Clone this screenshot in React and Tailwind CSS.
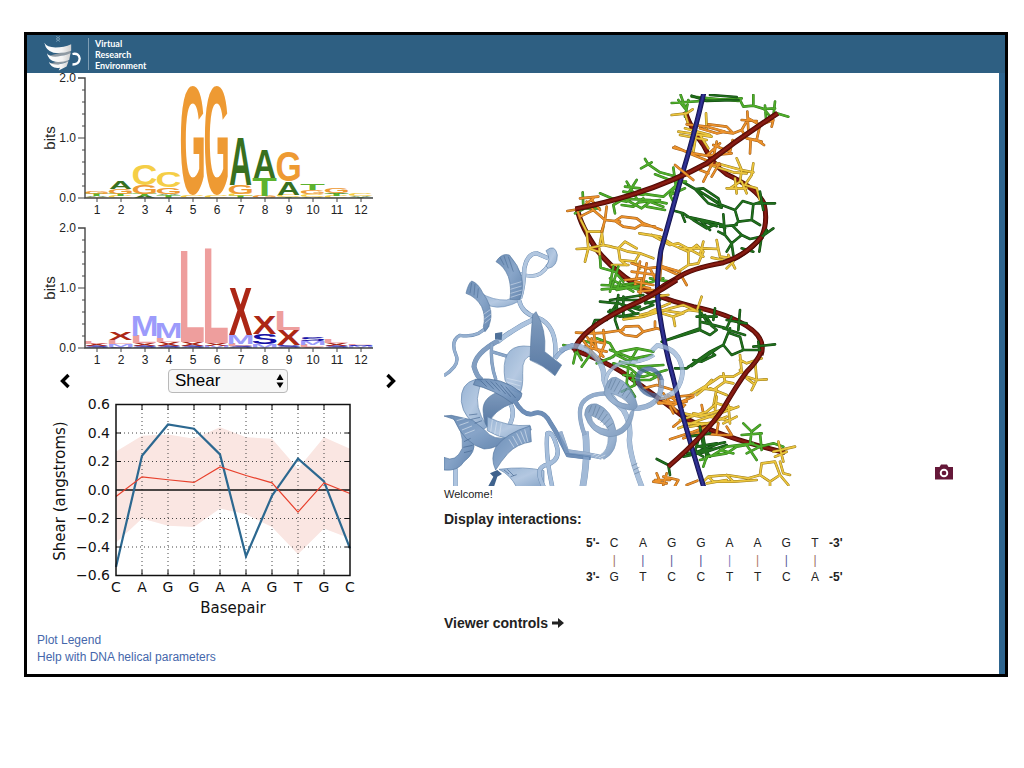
import React from "react";

const GLYPHS = {
  A: [0.0, 0.72, 0],
  C: [0.045, 0.64, 1],
  G: [0.045, 0.68, 1],
  T: [0.02, 0.57, 0],
  L: [0.07, 0.52, 0],
  X: [0.01, 0.65, 0],
  M: [0.07, 0.69, 0],
  S: [0.04, 0.58, 1],
};

const BASE_COLORS = { A: "#38701f", C: "#f5ce46", G: "#ee9a33", T: "#5db22f" };
const SHAPE_COLORS = { L: "#ee9e9d", X: "#ac2716", M: "#9c9bfb", S: "#1510a5" };

const BASE_STACKS = [
  [["C", 1], ["A", 1], ["T", 2], ["G", 3]],
  [["C", 2], ["T", 2], ["G", 5], ["A", 7]],
  [["A", 2], ["T", 2], ["G", 9], ["C", 21]],
  [["T", 3], ["A", 1], ["G", 7], ["C", 16]],
  [["C", 2], ["G", 111]],
  [["C", 2], ["G", 111]],
  [["T", 2], ["C", 2], ["G", 9], ["A", 47]],
  [["G", 2], ["T", 18], ["A", 28]],
  [["T", 1], ["C", 2], ["A", 13], ["G", 30]],
  [["A", 1], ["C", 3], ["G", 4], ["T", 6]],
  [["C", 2], ["T", 2], ["A", 1], ["G", 5]],
  [["T", 1], ["A", 1], ["C", 2]],
];

const SHAPE_STACKS = [
  [["S", 2], ["X", 2], ["L", 3]],
  [["S", 1], ["M", 3], ["L", 4], ["X", 8]],
  [["S", 2], ["X", 3], ["L", 7], ["M", 20]],
  [["S", 2], ["X", 4], ["L", 4], ["M", 15]],
  [["S", 2], ["X", 4], ["L", 90]],
  [["M", 2], ["X", 3], ["L", 95]],
  [["S", 2], ["L", 2], ["M", 9], ["X", 47]],
  [["M", 4], ["S", 10], ["X", 18]],
  [["S", 3], ["X", 15], ["L", 19]],
  [["X", 1], ["L", 2], ["M", 4], ["S", 4]],
  [["S", 2], ["X", 3], ["L", 4]],
  [["M", 2], ["S", 1], ["L", 1]],
];

function SequenceLogo({ label, stacks, colors }) {
  const base = 125;
  return (
    <svg role="img" aria-label={label} viewBox="0 0 350 142" className="h-[142px] w-[350px] overflow-visible font-['Liberation_Sans',Arial,sans-serif]">
      {stacks.map((stack, i) => {
        let y = base;
        return stack.map(([letter, h], j) => {
          const [left, width, round] = GLYPHS[letter];
          const sx = 23 / (width * 20);
          const cap = round ? 0.72 : 0.688;
          const sy = h / (cap * 20);
          const baseline = y - (round ? 0.016 * 20 * sy : 0);
          y -= h;
          return (
            <text key={i + "-" + j} fontSize="20" fontWeight="700" fill={colors[letter]}
              transform={`translate(${48 + 24 * i - left * 20 * sx} ${baseline}) scale(${sx} ${sy})`}>
              {letter}
            </text>
          );
        });
      })}
      <g stroke="#444" strokeWidth="1" fill="none">
        <path strokeWidth="1.4" d="M41 5H48V125H336" />
        <path d="M41 65H48M41 125H48M45 17H48M45 29H48M45 41H48M45 53H48M45 77H48M45 89H48M45 101H48M45 113H48" />
        {stacks.map((_, i) => <path key={i} d={`M${60 + 24 * i} 125v4`} />)}
      </g>
      <g fill="#222" fontSize="12">
        <text x="39" y="9" textAnchor="end">2.0</text>
        <text x="39" y="69" textAnchor="end">1.0</text>
        <text x="39" y="129" textAnchor="end">0.0</text>
        {stacks.map((_, i) => (
          <text key={i} x={60 + 24 * i} y="141" textAnchor="middle">{i + 1}</text>
        ))}
        <text fontSize="15" textAnchor="middle" transform="translate(18 65) rotate(-90)">bits</text>
      </g>
    </svg>
  );
}

const SHEAR = [-0.54, 0.24, 0.46, 0.43, 0.25, -0.465, -0.04, 0.22, 0.06, -0.41];
const MEAN = [-0.045, 0.092, 0.072, 0.053, 0.162, 0.102, 0.05, -0.155, 0.05, -0.025];
const UPPER = [0.27, 0.38, 0.39, 0.36, 0.44, 0.37, 0.36, 0.15, 0.37, 0.29];
const LOWER = [-0.37, -0.2, -0.25, -0.26, -0.13, -0.17, -0.26, -0.45, -0.27, -0.34];
const px = (i) => 76 + i * 26;
const py = (v) => 93 - v * 142.5;
const points = (values) => values.map((v, i) => `${px(i)},${py(v)}`).join(" ");

function ShearPlot() {
  const band = UPPER.map((v, i) => `${px(i)},${py(v)}`)
    .concat(LOWER.map((v, i) => `${px(i)},${py(v)}`).reverse())
    .join(" ");
  return (
    <svg role="img" aria-label="Shear by base pair" viewBox="0 0 320 222" className="h-[222px] w-[320px] font-['DejaVu_Sans',sans-serif]">
      <polygon points={band} fill="#fae6e2" />
      <g stroke="#444" strokeWidth="1" strokeDasharray="1 3">
        {[1, 2, 3, 4, 5, 6, 7, 8].map((i) => <path key={i} d={`M${px(i)} 8V178`} />)}
        {[0.4, 0.2, -0.2, -0.4].map((v) => <path key={v} d={`M76 ${py(v)}H310`} />)}
      </g>
      <path d="M76 93H310" stroke="#111" strokeWidth="1.3" />
      <polyline points={points(SHEAR)} fill="none" stroke="#2c6890" strokeWidth="2.2" />
      <polyline points={points(MEAN)} fill="none" stroke="#e8402c" strokeWidth="1.2" />
      <g stroke="#111" fill="none">
        {[1, 2, 3, 4, 5, 6, 7, 8].map((i) => <path key={i} d={`M${px(i)} 8v5M${px(i)} 178v-5`} />)}
        {[0.4, 0.2, -0.2, -0.4].map((v) => <path key={v} d={`M76 ${py(v)}h5M310 ${py(v)}h-5`} />)}
        <rect x="76" y="7.5" width="234" height="171" strokeWidth="1.5" />
      </g>
      <g fill="#111" fontSize="14">
        {["0.6", "0.4", "0.2", "0.0", "−0.2", "−0.4", "−0.6"].map((t, i) => (
          <text key={t} x="70" y={12 + i * 28.5} textAnchor="end">{t}</text>
        ))}
        {"CAGGAAGTGC".split("").map((c, i) => (
          <text key={i} x={px(i)} y="195" textAnchor="middle">{c}</text>
        ))}
        <text x="193" y="216" fontSize="15" textAnchor="middle">Basepair</text>
        <text fontSize="15" textAnchor="middle" transform="translate(25 94) rotate(-90)">Shear (angstroms)</text>
      </g>
    </svg>
  );
}

const TONES = {
  green: ["#2f7a18", "#50ad2b"],
  dark: ["#0f4410", "#22701d"],
  yellow: ["#987818", "#ecc63e"],
  orange: ["#9c5a16", "#ec922c"],
};

function Sticks({ tone, d }) {
  return (
    <g fill="none" strokeLinecap="round" strokeLinejoin="round">
      <path d={d} stroke={TONES[tone][0]} strokeWidth="8" />
      <path d={d} stroke={TONES[tone][1]} strokeWidth="5" />
    </g>
  );
}

function Tube({ d, edge, fill, shine, width }) {
  return (
    <g fill="none" strokeLinejoin="round">
      <path d={d} stroke={edge} strokeWidth={width} />
      <path d={d} stroke={fill} strokeWidth={width * 0.7} />
      <path d={d} stroke={shine} strokeWidth={width * 0.25} />
    </g>
  );
}

const RED = { edge: "#480804", fill: "#78140c", shine: "#8c2016" };

function Ribbon({ d, w, c }) {
  return (
    <g fill="none" strokeLinejoin="round">
      <path d={d} stroke="#557aa6" strokeWidth={w + 2} />
      <path d={d} stroke={c} strokeWidth={w} />
    </g>
  );
}

function Molecule() {
  return (
    <svg role="img" aria-label="Protein bound to a DNA double helix" viewBox="444 94 356 392" className="h-[392px] w-[356px] shrink-0">
      <defs>
        <linearGradient id="rib" x1="0" y1="0" x2="1" y2="1">
          <stop offset="0" stopColor="#5f83ae" /><stop offset=".5" stopColor="#7d9dc4" /><stop offset="1" stopColor="#567ba8" />
        </linearGradient>
        <linearGradient id="ribLight" x1="0" y1="0" x2="1" y2="1">
          <stop offset="0" stopColor="#8fadd0" /><stop offset=".5" stopColor="#aec4df" /><stop offset="1" stopColor="#7e9ec4" />
        </linearGradient>
        <linearGradient id="ribDark" x1="0" y1="0" x2="0" y2="1">
          <stop offset="0" stopColor="#7593b8" /><stop offset="1" stopColor="#486c9a" />
        </linearGradient>
      </defs>

      <g transform="translate(560 85) scale(.33333)">
        <Tube {...RED} width={15} d="M375 80Q395 135 430 180Q455 235 500 268Q590 310 612 355Q625 410 605 455Q570 500 510 528" />
        <Tube {...RED} width={16} d="M52 372Q62 425 115 500Q180 580 280 628" />
      </g>
      <g transform="translate(560 280) scale(.33333)">
        <Tube {...RED} width={15} d="M280 43Q340 65 400 80Q500 100 560 138Q620 175 603 225" />
        <Tube {...RED} width={15} d="M42 210Q140 245 200 285Q270 335 370 410Q460 465 675 518" />
      </g>

      <g transform="translate(560 85) scale(.33333)">
        <Sticks tone="green" d="M335 54L545 40M362 30L380 80M375 70L355 45M385 45L375 95M395 35L535 48M540 45L550 65L580 62L580 30M580 62L612 72L645 70M615 62L618 100M645 50L640 95M650 85L685 95M612 72L635 100" />
        <Sticks tone="dark" d="M395 32L440 48L535 45M450 30L530 36" />
        <Sticks tone="yellow" d="M335 90L380 85L398 73M375 85L385 118M355 140L455 155M360 150L440 165M375 130L450 150M438 85L440 130M410 140L400 200M420 150L445 190M450 240L520 262L560 265M470 235L525 250L545 255L580 262M530 220L545 255L540 290L510 310M580 235L575 270L555 300L590 310L600 345M500 310L560 310M525 280L530 325M545 290L560 325" />
        <Sticks tone="orange" d="M380 118L440 125L495 140L470 145L420 130M445 118L500 125L520 145L480 140M520 145L545 135L565 100L600 120L640 105L635 125M545 105L590 108M562 80L565 135M600 120L590 165L560 160L545 135M590 165L612 180M570 205L572 165M560 160L605 170M340 188L400 205L440 212L480 175M345 185L400 210L450 230M460 180L510 200L518 165M440 212L515 205M470 170L455 240L430 290M430 240L480 240M445 265L420 255M478 235L455 275" />
        <Sticks tone="dark" d="M350 280L405 312L430 310L475 340L485 368L445 355L405 312M420 320L470 350M415 316L478 358M485 360L525 375L548 348L580 358L575 405L535 410L525 375M580 358L605 350M600 320L610 375M590 355L645 355M575 405L600 420M345 378L370 385L400 405L440 430L475 415L495 430M365 385L375 410M380 395L460 412L490 420M420 405L450 435M410 402L470 424M490 388L495 450L515 475L500 500M495 450L475 440M535 410L520 425L545 450L515 475M545 450L570 462L605 455L640 430M605 455L598 500M515 475L520 510M545 490L580 500M480 425L530 420M620 435L605 460" />
        <Sticks tone="green" d="M255 222L265 238L300 262M243 250L275 232M300 262L350 275M285 268L330 285M340 248L350 320M370 260L345 290L378 290M355 290L330 330L375 310M330 330L340 350M200 290L230 340M230 285L195 340M195 305L240 310M210 330L160 360M165 340L270 345L320 355M200 345L245 370L270 350L310 365M185 360L220 365L250 340M120 325L155 340L200 350M165 385L160 360M68 322L70 365M45 385L75 370L118 370M240 325L310 335L350 300M260 365L315 375M190 320L250 330M235 352L300 345" />
        <Sticks tone="yellow" d="M60 400L80 440L125 440L130 480L85 490L80 440M50 492L85 490L75 530M130 480L155 485M85 490L115 500M130 480L175 490L195 470L230 490M175 490L180 525L225 530L240 505L205 500L175 490M240 505L280 520M155 540L205 540M225 530L240 550M180 525L200 540M118 490L120 520M130 425L120 475" />
        <Sticks tone="orange" d="M22 378L60 372L100 340M60 340L115 335M80 350L100 375L60 395M95 345L120 375M100 375L135 405L180 410M135 405L140 365M165 408L185 395L230 400L250 415L225 430L190 425L165 408M250 415L305 435M245 420L285 425M135 405L125 440M50 370L60 400" />
        <Sticks tone="yellow" d="M238 445L300 455L340 480L385 500M275 450L330 480L355 475L430 515M385 500L410 480L430 500L415 535L385 540L385 500M430 490L475 492L470 465M475 492L480 515L520 520M430 470L420 510M505 510L525 550M500 550L520 530M455 518L490 525M355 560L385 540M360 490L440 490" />
        <Sticks tone="green" d="M120 515L122 548L165 560L190 590M160 545L150 600L190 610M175 545L155 610M125 600L230 605L310 580M150 580L220 620M180 600L260 590M270 580L330 590" />
        <Sticks tone="orange" d="M215 535L260 550L310 545L360 560M240 530L225 600L270 610M260 535L250 590L240 625M305 510L300 580L290 600M215 560L290 570M195 585L245 580M300 545L355 570M360 565L380 600M270 550L290 590" />
      </g>

      <g transform="translate(560 280) scale(.33333)">
        <Sticks tone="green" d="M125 28L240 20M160 5L150 35M180 5L170 30L250 15M190 15L240 30" />
        <Sticks tone="orange" d="M225 5L280 15M245 0L240 50M235 35L280 30" />
        <Sticks tone="dark" d="M150 60L250 45M120 65L175 70L240 90M175 45L165 120L175 150M190 50L190 110M150 90L240 80M175 60L250 60L280 75L240 90M145 95L180 110L235 100M170 70L140 120L105 120L95 145M255 70L300 60M160 105L225 112M185 75L225 100" />
        <Sticks tone="yellow" d="M190 118L250 110L330 85L370 75L405 90M240 105L300 90L370 100L340 110L290 95M345 138L340 110L385 90L425 95M412 88L425 50M280 50L325 45M270 95L330 70" />
        <Sticks tone="dark" d="M305 185L420 150M320 180L420 145M420 90L420 150L450 165L470 150L440 125L425 100M410 110L470 110M465 85L460 120M420 125L500 145L515 110M435 105L460 140M540 90L535 150M490 145L555 165M510 145L490 195L515 225L550 210L540 170L510 160M550 210L600 210M580 200L645 193M595 185L600 230M490 195L450 215L400 250L380 265L345 265M480 200L430 235L385 260M450 215L465 225L425 245L400 240M455 215L395 258M500 120L560 130" />
        <Sticks tone="green" d="M10 195L50 205L40 250M45 205L65 240M65 260L90 225M60 180L100 190M110 175L150 190L170 225M150 235L180 215L230 205L280 215M170 225L200 240L250 230L275 225M210 245L230 210M160 250L210 265L240 290M150 210L230 240M110 250L160 230M180 245L235 260L310 255M190 285L250 290L320 270M205 260L200 310L225 350M185 335L225 315L215 280M215 300L270 300L300 285M235 265L290 290" />
        <Sticks tone="orange" d="M48 158L100 160L135 158L190 150M180 155L195 140L235 138L250 155L230 170L195 165L180 155M250 155L290 145L300 148M285 125L285 140M100 150L110 210M80 170L130 230M75 200L140 215M85 180L135 190M130 150L135 190L115 240M95 175L90 220M65 175L110 235" />
        <Sticks tone="yellow" d="M540 225L545 275L520 290L480 290L450 310L400 340L380 350M490 280L495 305L460 330L430 325L455 300M605 235L560 250L540 240M585 240L590 300L560 290L540 270M590 300L620 298M590 300L575 330M560 295L580 310M440 320L410 345M450 325L500 345M470 325L460 380M495 305L520 310" />
        <Sticks tone="orange" d="M250 325L290 315L340 330M300 355L400 345M295 370L380 365M310 340L350 395M290 365L340 375L400 350M330 380L340 400M425 375L430 400M330 478L400 455L440 440M340 440L365 420M420 460L480 465L515 465M475 430L470 460M500 440L515 465M370 475L440 450M295 285L300 320M310 362L375 375M325 345L370 380" />
        <Sticks tone="yellow" d="M355 445L420 420L480 400L535 380M370 400L420 410L500 385M380 430L450 430L500 410M360 420L440 395L470 370L520 385M505 375L510 430M490 430L530 410M390 440L470 425M400 400L500 420M470 350L465 390" />
        <Sticks tone="dark" d="M385 470L450 460M420 440L430 500L450 530M400 520L480 490L495 487M370 530L440 515L500 495M420 500L450 510M430 470L440 530M395 510L430 530M290 537L325 555L330 585M415 480L400 530M380 520L470 505M410 500L470 490" />
        <Sticks tone="green" d="M430 560L440 530L500 520L530 500L560 495M440 535L420 540M460 525L500 500L580 490M550 430L575 455L600 435M575 455L570 490L600 500L640 490M600 460L605 510M560 495L590 540M545 465L605 460M560 520L600 500M640 490L670 500M480 510L520 520" />
        <Sticks tone="yellow" d="M640 515L705 500M655 485L670 545M645 530L680 515M605 550L645 545L660 585L630 605L600 585L605 550M660 545L670 580L690 585M660 585L685 615M630 605L630 618M600 585L565 595L500 585L445 590L430 605M500 585L520 605L590 600M445 590L460 605L520 605M440 610L500 600" />
        <Sticks tone="orange" d="M290 580L300 605L280 605L320 610M310 590L355 600L345 618M320 580L310 615M380 615L412 602M285 600L330 600" />
      </g>

      <Tube edge="#12124a" fill="#24257c" shine="#34369a" width={5} d="M704 92Q695 132 682 175Q668 225 661 250Q655 285 659 310Q664 345 673 377Q683 420 704 488" />
      <g transform="translate(560 85) scale(.33333)">
        <Tube {...RED} width={16} d="M653 85Q540 158 440 235Q350 285 220 328Q130 356 46 372" />
        <Tube {...RED} width={15} d="M605 455Q560 510 490 533Q390 550 350 580Q310 600 275 628" />
        <Sticks tone="orange" d="M345 240L400 285" />
      </g>
      <g transform="translate(560 280) scale(.33333)">
        <Tube {...RED} width={16} d="M350 0Q270 52 200 82Q60 150 42 212" />
        <Tube {...RED} width={15} d="M603 215Q595 240 560 275Q530 315 490 385Q440 460 325 560" />
      </g>

      <g transform="translate(440 230) scale(.33333)" opacity=".9">
        <Ribbon w={9} c="#b2c7e0" d="M240 130Q295 155 325 105Q345 75 335 60" />
        <Ribbon w={11} c="#a9c0dc" d="M240 205Q252 170 253 115Q262 70 290 70L325 85" />
        <path fill="url(#ribLight)" stroke="#557aa6" strokeWidth="2" d="M318 62Q345 40 352 75Q352 110 325 115L318 108Q335 90 318 62Z" />
        <Ribbon w={8} c="#8ba8cb" d="M145 285Q115 325 60 316Q30 332 48 375Q62 405 12 437" />
        <path fill="url(#ribLight)" stroke="#6488b3" strokeWidth="2" d="M120 188Q160 212 200 210L243 195L240 212Q190 240 150 228Z" />
        <path fill="url(#rib)" stroke="#476c99" strokeWidth="2" d="M168 95Q185 68 208 75Q235 105 245 140Q252 180 238 210L210 208Q215 170 205 140Q192 108 168 95Z" />
        <path fill="url(#rib)" stroke="#476c99" strokeWidth="2" d="M78 190Q85 160 95 153Q115 160 128 188Q155 225 153 260Q150 290 135 305L130 290Q138 260 125 230Q108 200 78 190Z" />
        <Ribbon w={11} c="#a4bddb" d="M237 210Q245 250 290 262Q355 285 345 385" />
        <Ribbon w={13} c="#a4bddb" d="M172 335Q230 290 290 264" />
        <path fill="#3e628e" d="M165 310L187 306L185 330L165 328Z" />
        <Ribbon w={13} c="#7594bb" d="M175 332Q105 370 102 410Q110 440 125 450" />
        <Ribbon w={8} c="#7f9dc2" d="M155 340Q150 400 168 450M155 365L205 380" />
        <path fill="url(#ribLight)" stroke="#557aa6" strokeWidth="2" d="M195 450Q180 350 250 348L280 350L280 378Q245 375 248 430Q250 470 240 490L215 480Q205 470 195 450Z" />
        <path fill="url(#ribDark)" stroke="#476c99" strokeWidth="2" d="M278 255L288 245Q320 300 314 365L365 405L345 437Q310 405 270 390Q272 320 278 255Z" />
        <Ribbon w={11} c="#93afd2" d="M345 385Q370 352 400 345" />
        <g stroke="#dbe5f1" strokeWidth="2" fill="none" opacity=".8">
          <path d="M211 165L244 155M211 178L245 168M212 190L246 180M212 202L243 192M128 255L152 238M132 268L153 252M134 280L152 265M200 445L245 455M198 455L242 468M203 468L240 480" />
        </g>
        <path fill="none" d="M95 158L90 190M105 162L102 196M115 175L112 204M180 82L192 105M192 78L205 115M205 80L220 125" stroke="#3f638f" strokeWidth="2" />
      </g>

      <g transform="translate(444 370) scale(.33333)" opacity=".92">
        <Ribbon w={12} c="#a8c0dd" d="M34 295V352" />
        <Ribbon w={11} c="#a4bddb" d="M195 95Q222 130 185 185" />
        <path fill="url(#ribLight)" stroke="#557aa6" strokeWidth="2" d="M95 28Q48 40 52 95Q58 148 118 178L130 170Q88 110 105 60Q115 35 95 28Z" />
        <path fill="url(#ribDark)" stroke="#476c99" strokeWidth="2" d="M175 62Q110 80 118 130Q120 160 130 170Q145 120 210 98Z" />
        <path fill="url(#rib)" stroke="#3f638f" strokeWidth="2" d="M95 28Q175 18 234 70Q232 95 205 100Q150 58 88 44Z" />
        <path fill="url(#rib)" stroke="#476c99" strokeWidth="2" d="M22 137Q60 180 55 235Q35 280 0 262V300Q42 305 60 275Q98 245 88 215Q60 190 22 137Z" />
        <path fill="url(#rib)" stroke="#476c99" strokeWidth="2" d="M0 138L22 136L85 150L122 180Q150 215 192 200Q160 238 120 237Q60 220 30 148Z" />
        <path fill="url(#ribLight)" stroke="#557aa6" strokeWidth="2" d="M130 140Q190 172 258 166L262 180Q220 185 190 205Q160 200 130 182Z" />
        <path fill="url(#rib)" stroke="#476c99" strokeWidth="2" d="M258 168L262 215Q218 222 192 250Q170 275 155 300Q138 265 155 232Q185 190 258 168Z" />
        <path fill="url(#ribLight)" stroke="#557aa6" strokeWidth="2" d="M165 298Q240 288 300 302V352H218Q200 315 165 298Z" />
        <path fill="#2f5584" d="M138 310L160 300L174 312L160 320L150 350H132L148 320Z" />
        <Ribbon w={12} c="#6285b1" d="M212 92Q240 142 270 130Q300 120 320 160Q340 190 372 255L440 263" />
        <Ribbon w={11} c="#9fb9d8" d="M300 352Q272 300 300 287Q348 275 340 235Q325 180 310 190Q303 250 325 352" />
        <g fill="none" strokeWidth="2">
          <path stroke="#365b88" d="M110 32L128 50M125 32L150 58M140 34L168 64M155 38L185 72M170 44L200 80M185 50L215 84M75 135L100 132M82 148L108 142M92 160L114 152M60 215L80 205M58 232L86 226M60 248L84 242M180 300L195 312M190 298L210 318M200 320L218 314" />
          <path stroke="#d5e1ef" d="M38 152L62 145M46 166L74 156M54 180L84 168M62 192L92 180M195 208L210 232M206 198L222 226M218 190L234 222M230 184L244 218M242 178L252 216M145 150L140 185M158 156L152 192M172 160L166 198" />
        </g>
      </g>

      <g transform="translate(560 340) scale(.33333)" opacity=".76">
        <Ribbon w={14} c="#92aed1" d="M0 33Q50 0 92 38Q135 70 132 120Q145 170 190 210Q215 250 208 300Q210 350 246 442" />
        <Ribbon w={9} c="#9db7d7" d="M140 150Q125 95 185 68Q250 68 282 45" />
        <Ribbon w={12} c="#9db7d7" d="M276 32L292 16Q360 25 368 95Q362 165 300 174" />
        <Ribbon w={12} c="#43669a" d="M300 168Q240 168 233 115Q235 88 270 86Q298 92 306 125" />
        <Ribbon w={14} c="#7f9fc6" d="M304 120Q310 205 215 206" />
        <Ribbon w={18} c="#86a5cb" d="M68 442Q85 350 76 275" />
        <Ribbon w={11} c="#7394bd" d="M74 285Q45 205 75 180Q95 160 140 160" />
        <Ribbon w={12} c="#7c9bc2" d="M0 275L20 334Q80 342 125 352" />
        <path fill="url(#rib)" stroke="#557aa6" strokeWidth="2" d="M118 346Q145 335 145 290L169 275Q175 335 132 358Z" />
        <path fill="url(#rib)" fillRule="evenodd" stroke="#476c99" strokeWidth="2" d="M132 160Q140 108 168 112Q218 132 232 195Q230 212 208 210Q150 200 132 160ZM153 160Q165 190 208 194Q190 170 153 160Z" />
        <path fill="url(#rib)" fillRule="evenodd" stroke="#476c99" strokeWidth="2" d="M74 225Q75 188 110 192Q155 208 168 272Q200 260 212 215L222 210Q215 290 145 290Q90 280 74 225ZM93 226Q95 262 146 270Q130 240 93 226Z" />
        <path fill="none" strokeWidth="2" stroke="#34577f" d="M155 118L145 145M168 116L152 150M180 122L162 155M192 132L174 162M202 142L186 168M212 155L198 175M95 196L86 218M108 196L98 226M120 200L106 232M132 210L114 240M142 222L122 248M150 235L130 256M158 250L140 264M215 378L232 370M220 390L238 382M224 402L242 394" />
        <path fill="none" strokeWidth="2" stroke="#d5e1ef" d="M98 346L112 340M106 352L124 342M116 354L136 345" />
      </g>
    </svg>
  );
}

function BrandMark() {
  return (
    <svg aria-hidden="true" viewBox="0 0 120 116" className="h-[38px] w-10">
      <defs>
        <linearGradient id="mug" x1="0" x2="1"><stop offset="0" stopColor="#fff" /><stop offset=".65" stopColor="#f4f4f4" /><stop offset="1" stopColor="#cfcfcf" /></linearGradient>
      </defs>
      <path d="M42 4l12 8-12 8M54 4l-12 8 12 8" stroke="#8fb0c6" strokeWidth="2" fill="none" />
      <path fill="#8f9aa3" d="M86 46L18 64L30 70L86 58ZM80 72L22 88L34 94L78 82Z" />
      <path fill="url(#mug)" d="M6 24Q14 38 40 38Q66 38 88 28L88 48Q62 58 34 54Q12 50 6 24Z" />
      <path fill="url(#mug)" d="M14 56Q22 68 46 66Q70 64 86 56L82 76Q62 84 40 82Q18 78 14 56Z" />
      <path fill="url(#mug)" d="M20 82Q28 92 48 90Q66 88 80 80L74 96L50 108L54 100Q26 104 20 82Z" />
      <path d="M92 58Q112 54 114 72Q112 90 92 90" fill="none" stroke="#fff" strokeWidth="7" />
    </svg>
  );
}

const BONDS = ["#a0705f", "#5a5a9c", "#5a5a9c", "#4c4c92", "#8080c0", "#b07a68", "#5a5a9c", "#9a6c64"];

function Bases() {
  return (
    <table className="mt-[6px] ml-[142px] border-collapse text-center text-[12px] leading-[17px] text-[#222]">
      <tbody>
        <tr>
          <th scope="row">5'-</th>
          {"CAGGAAGT".split("").map((c, i) => <td key={i} className="px-[10px]">{c}</td>)}
          <th>-3'</th>
        </tr>
        <tr>
          <td />
          {BONDS.map((c, i) => (
            <td key={i} style={{ color: c }}>|</td>
          ))}
          <td />
        </tr>
        <tr>
          <th scope="row">3'-</th>
          {"GTCCTTCA".split("").map((c, i) => <td key={i} className="px-[10px]">{c}</td>)}
          <th>-5'</th>
        </tr>
      </tbody>
    </table>
  );
}

export default function App() {
  return (
    <div className="min-h-screen bg-white pt-8 pr-4 pl-6 font-['Liberation_Sans',Arial,sans-serif] text-[#222]">
      <div className="border-[3px] border-black">
        <header className="flex h-[38px] items-center bg-[#2e5f82] pl-[15px] text-white">
          <BrandMark />
          <span className="mx-[6px] h-8 w-px bg-[#7d9db4]" />
          <span className="font-['Lato',sans-serif] text-[9px] leading-[11px] font-bold">
            Virtual<br />Research<br />Environment
          </span>
        </header>
        <main className="flex border-r-[6px] border-[#2e658f]">
          <section className="w-[417px] shrink-0 pb-2 pl-[10px]">
            <div className="flex flex-col gap-2">
              <SequenceLogo label="Base sequence logo" stacks={BASE_STACKS} colors={BASE_COLORS} />
              <SequenceLogo label="Shape sequence logo" stacks={SHAPE_STACKS} colors={SHAPE_COLORS} />
            </div>
            <div className="mt-1 flex w-[360px] items-center justify-between pl-[22px]">
              <button type="button" aria-label="Previous parameter">
                <svg viewBox="0 0 12 16" className="h-4 w-3"><path d="M9.500 2L3.500 8L9.500 14" fill="none" stroke="#000" strokeWidth="3.400" /></svg>
              </button>
              <div className="relative">
                <select aria-label="Helical parameter" defaultValue="Shear" className="h-6 w-[120px] appearance-none rounded-[4px] border border-[#b9b9b9] bg-[#f7f7f7] pl-[6px] text-[17px] leading-[20px] text-black">
                  <option>Shear</option>
                </select>
                <svg aria-hidden="true" viewBox="0 0 8 16" className="pointer-events-none absolute top-1 right-1 h-4 w-2"><path d="M4 1L7.500 7H.5ZM4 15L.5 9.500H7.500Z" /></svg>
              </div>
              <button type="button" aria-label="Next parameter">
                <svg viewBox="0 0 12 16" className="h-4 w-3"><path d="M2.500 2L8.500 8L2.500 14" fill="none" stroke="#000" strokeWidth="3.400" /></svg>
              </button>
            </div>
            <div className="mt-1 pl-[3px]"><ShearPlot /></div>
            <nav className="mt-[13px] flex flex-col items-start text-[12px] leading-[17px] text-[#4567ab]">
              <a href="#legend">Plot Legend</a>
              <a href="#help">Help with DNA helical parameters</a>
            </nav>
          </section>
          <section className="min-w-0 flex-1 pt-[21px]">
            <div className="flex items-end justify-between pr-[46px]">
              <Molecule />
              <button type="button" aria-label="Save image" className="mb-[6px]">
                <svg viewBox="0 0 18 16" className="h-4 w-[18px]">
                  <path fill="#651839" d="M0 3H4.500L6 .5H12L13.500 3H18V15.500H0Z" />
                  <circle cx="9" cy="9" r="3.300" fill="none" stroke="#fff" strokeWidth="1.900" />
                </svg>
              </button>
            </div>
            <p className="text-[11px] leading-[16px]">Welcome!</p>
            <h2 className="mt-[7px] text-[14px] leading-[20px] font-bold">Display interactions:</h2>
            <Bases />
            <h2 className="mt-[27px] flex items-center gap-1 text-[14px] leading-[20px] font-bold">
              Viewer controls
              <svg aria-hidden="true" viewBox="0 0 12 10" className="h-[10px] w-3"><path fill="#222" d="M0 3.500H6V0L12 5L6 10V6.500H0Z" /></svg>
            </h2>
          </section>
        </main>
      </div>
    </div>
  );
}
